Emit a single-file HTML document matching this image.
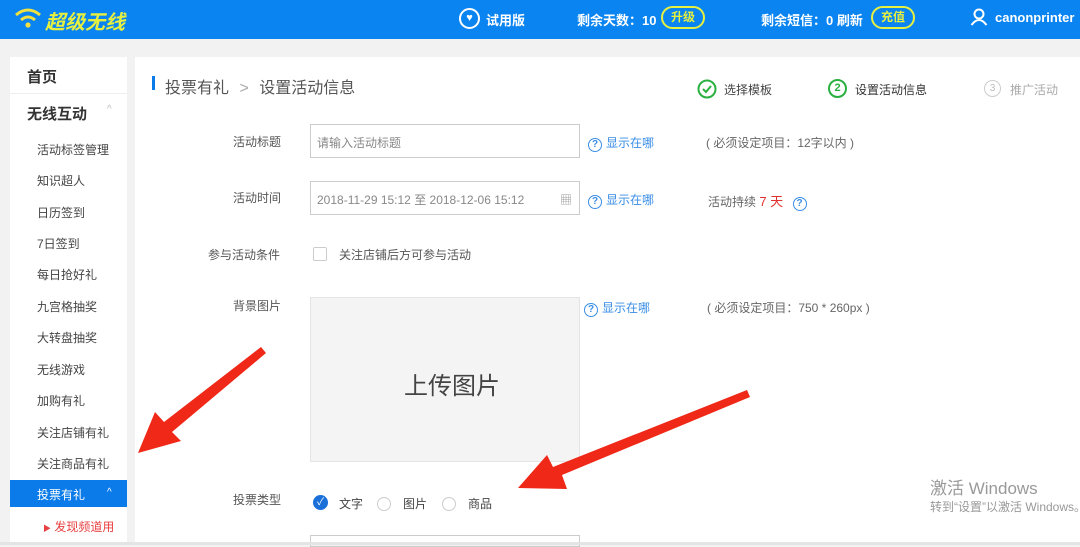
<!DOCTYPE html>
<html><head><meta charset="utf-8"><style>
*{margin:0;padding:0;box-sizing:border-box}
body{width:1080px;height:545px;overflow:hidden;background:#f2f2f2;font-family:"Liberation Sans","Noto Sans CJK SC",sans-serif;position:relative;color:#555}
.a{position:absolute;white-space:nowrap}
.hd{left:0;top:0;width:1080px;height:39px;background:#0a84f0}
.hw{color:#fff;font-size:13px;font-weight:bold}
.pill{border:2px solid #e6f040;border-radius:12px;color:#e6f040;font-size:12px;font-weight:bold;padding:0 8px;height:23px;line-height:19px}
.sb{left:10px;top:57px;width:117px;height:488px;background:#fff}
.si{font-size:12px;color:#444;left:37px}
.mn{left:135px;top:57px;width:945px;height:488px;background:#fff}
.lb{font-size:12px;color:#555}
.inp{border:1px solid #ccc;background:#fff;height:34px;font-size:12px;color:#888;padding:9px 6px}
.q{display:inline-block;width:14px;height:14px;border:1.5px solid #3a8ee6;border-radius:50%;color:#3a8ee6;font-size:10px;line-height:11px;text-align:center;font-weight:bold;vertical-align:0;margin-right:4px}
.sh{font-size:12px;color:#3a8ee6}
.nt{font-size:12px;color:#666}
.rd{display:inline-block;width:14px;height:14px;border:1px solid #ccc;border-radius:50%;vertical-align:-3px;margin-right:8px}
</style></head><body>
<div class="a hd"></div>
<svg class="a" style="left:14px;top:6px" width="28" height="24" viewBox="0 0 28 24"><path d="M2 9 Q14 -1 26 9" stroke="#f0e040" stroke-width="3" fill="none"/><path d="M7 14 Q14 8 21 14" stroke="#f0e040" stroke-width="3" fill="none"/><circle cx="14" cy="19" r="2.6" fill="#f0e040"/></svg>
<div class="a" style="left:45px;top:6px;font-size:20px;font-weight:bold;font-style:italic;color:#e6f040">超级无线</div>
<div class="a" style="left:459px;top:8px;width:21px;height:21px;border:2px solid #fff;border-radius:50%;color:#fff;font-size:11px;text-align:center;line-height:17px">♥</div>
<div class="a hw" style="left:486px;top:10px">试用版</div>
<div class="a hw" style="left:577px;top:10px">剩余天数：10</div>
<div class="a pill" style="left:661px;top:6px">升级</div>
<div class="a hw" style="left:761px;top:10px">剩余短信：0 刷新</div>
<div class="a pill" style="left:871px;top:6px">充值</div>
<svg class="a" style="left:970px;top:8px" width="18" height="18" viewBox="0 0 18 18"><circle cx="9" cy="6" r="4.5" stroke="#fff" stroke-width="2" fill="none"/><path d="M1.5 17 Q9 7 16.5 17" stroke="#fff" stroke-width="2" fill="none"/></svg>
<div class="a hw" style="left:995px;top:10px">canonprinter</div>

<div class="a sb"></div>
<div class="a" style="left:27px;top:66px;font-size:15px;color:#333;font-weight:bold">首页</div>
<div class="a" style="left:10px;top:93px;width:117px;height:1px;background:#eee"></div>
<div class="a" style="left:27px;top:103px;font-size:15px;color:#333;font-weight:bold">无线互动</div>
<div class="a" style="left:107px;top:104px;font-size:10px;color:#bbb">^</div>
<div class="a si" style="top:141px">活动标签管理</div>
<div class="a si" style="top:172px">知识超人</div>
<div class="a si" style="top:204px">日历签到</div>
<div class="a si" style="top:235px">7日签到</div>
<div class="a si" style="top:266px">每日抢好礼</div>
<div class="a si" style="top:298px">九宫格抽奖</div>
<div class="a si" style="top:329px">大转盘抽奖</div>
<div class="a si" style="top:361px">无线游戏</div>
<div class="a si" style="top:392px">加购有礼</div>
<div class="a si" style="top:424px">关注店铺有礼</div>
<div class="a si" style="top:455px">关注商品有礼</div>
<div class="a" style="left:10px;top:480px;width:117px;height:27px;background:#0a7be8"></div>
<div class="a" style="left:37px;top:486px;font-size:12px;color:#fff">投票有礼</div>
<div class="a" style="left:107px;top:487px;font-size:10px;color:#fff">^</div>
<div class="a" style="left:43px;top:518px;font-size:12px;color:#e84040"><span style="font-size:8px">▶</span> 发现频道用</div>

<div class="a mn"></div>
<div class="a" style="left:152px;top:76px;width:3px;height:14px;background:#0a7be8"></div>
<div class="a" style="left:165px;top:74px;font-size:16px;color:#555">投票有礼 <span style="color:#aaa;margin:0 6px">&gt;</span> 设置活动信息</div>
<svg class="a" style="left:697px;top:79px" width="20" height="20"><circle cx="10" cy="10" r="8.5" stroke="#2ab040" stroke-width="2" fill="none"/><path d="M6 10 L9 13 L14 7" stroke="#2ab040" stroke-width="2" fill="none"/></svg>
<div class="a lb" style="left:724px;top:81px;color:#444">选择模板</div>
<div class="a" style="left:828px;top:79px;width:19px;height:19px;border:2px solid #2ab040;border-radius:50%;color:#2ab040;font-size:11px;text-align:center;line-height:15px;font-weight:bold">2</div>
<div class="a lb" style="left:855px;top:81px;color:#333">设置活动信息</div>
<div class="a" style="left:984px;top:80px;width:17px;height:17px;border:1px solid #ccc;border-radius:50%;color:#bbb;font-size:10px;text-align:center;line-height:15px">3</div>
<div class="a lb" style="left:1010px;top:81px;color:#aaa">推广活动</div>

<div class="a lb" style="left:233px;top:133px">活动标题</div>
<div class="a inp" style="left:310px;top:124px;width:270px">请输入活动标题</div>
<div class="a sh" style="left:588px;top:134px"><span class="q">?</span>显示在哪</div>
<div class="a nt" style="left:706px;top:134px">( 必须设定项目：12字以内 )</div>

<div class="a lb" style="left:233px;top:189px">活动时间</div>
<div class="a inp" style="left:310px;top:181px;width:270px">2018-11-29 15:12 至 2018-12-06 15:12<span style="position:absolute;right:7px;color:#999">▦</span></div>
<div class="a sh" style="left:588px;top:191px"><span class="q">?</span>显示在哪</div>
<div class="a nt" style="left:708px;top:191px">活动持续 <span style="color:#e03030;font-size:13px">7 天</span> <span class="q" style="margin-left:6px">?</span></div>

<div class="a lb" style="left:208px;top:246px">参与活动条件</div>
<div class="a" style="left:313px;top:247px;width:14px;height:14px;border:1px solid #ccc;border-radius:2px"></div>
<div class="a lb" style="left:339px;top:246px">关注店铺后方可参与活动</div>

<div class="a lb" style="left:233px;top:297px">背景图片</div>
<div class="a" style="left:310px;top:297px;width:270px;height:165px;background:#f4f4f4;border:1px solid #e4e4e4"></div>
<div class="a" style="left:404px;top:366px;font-size:24px;color:#444">上传图片</div>
<div class="a sh" style="left:584px;top:299px"><span class="q">?</span>显示在哪</div>
<div class="a nt" style="left:707px;top:299px">( 必须设定项目：750 * 260px )</div>

<div class="a lb" style="left:233px;top:491px">投票类型</div>
<div class="a" style="left:313px;top:495px;width:15px;height:15px;border-radius:50%;background:#1a6fd8;color:#fff;font-size:10px;text-align:center;line-height:15px">✓</div>
<div class="a lb" style="left:339px;top:495px;color:#444">文字</div>
<div class="a" style="left:377px;top:495px"><span class="rd"></span></div>
<div class="a lb" style="left:403px;top:495px;color:#444">图片</div>
<div class="a" style="left:442px;top:495px"><span class="rd"></span></div>
<div class="a lb" style="left:468px;top:495px;color:#444">商品</div>
<div class="a" style="left:310px;top:535px;width:270px;height:12px;border:1px solid #ccc"></div>
<div class="a" style="left:0;top:542px;width:1080px;height:3px;background:#e4e4e4"></div>

<div class="a" style="left:930px;top:474px;font-size:17px;color:#999">激活 Windows</div>
<div class="a" style="left:930px;top:498px;font-size:12px;color:#999">转到“设置”以激活 Windows。</div>

<svg class="a" style="left:0;top:0" width="1080" height="545"><polygon points="261,347 266,353 172,432 181,441 138,453 155,412 164,422" fill="#f02818"/><polygon points="747,390 750,397 562,475 567,489 518,488 547,455 553,467" fill="#f02818"/></svg>
</body></html>
